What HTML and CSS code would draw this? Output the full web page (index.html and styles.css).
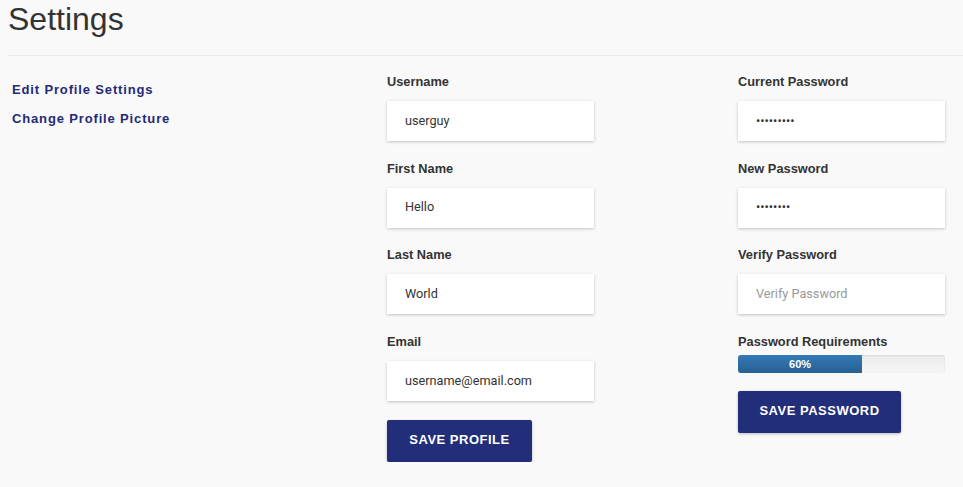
FILE: index.html
```html
<!DOCTYPE html>
<html>
<head>
<meta charset="utf-8">
<title>Settings</title>
<link rel="stylesheet" href="styles.css">
</head>
<body>
<div class="page">
  <header class="header">
    <h1 class="title">Settings</h1>
  </header>
  <main class="grid">
    <nav class="side">
      <a class="side-link" href="#">Edit Profile Settings</a>
      <a class="side-link" href="#">Change Profile Picture</a>
    </nav>
    <section class="col">
      <div class="field">
        <label class="label">Username</label>
        <input class="input" type="text" value="userguy">
      </div>
      <div class="field">
        <label class="label">First Name</label>
        <input class="input" type="text" value="Hello">
      </div>
      <div class="field">
        <label class="label">Last Name</label>
        <input class="input" type="text" value="World">
      </div>
      <div class="field">
        <label class="label">Email</label>
        <input class="input" type="text" value="username@email.com">
      </div>
      <button class="btn btn-profile">Save Profile</button>
    </section>
    <section class="col">
      <div class="field">
        <label class="label">Current Password</label>
        <input class="input" type="password" value="abcdefghi">
      </div>
      <div class="field">
        <label class="label">New Password</label>
        <input class="input" type="password" value="abcdefgh">
      </div>
      <div class="field">
        <label class="label">Verify Password</label>
        <input class="input" type="password" placeholder="Verify Password">
      </div>
      <div class="req">
        <label class="label">Password Requirements</label>
        <div class="progress"><div class="progress-bar" style="width:60%">60%</div></div>
      </div>
      <button class="btn btn-password">Save Password</button>
    </section>
  </main>
</div>
</body>
</html>
```
FILE: styles.css
```css
html, body {
  margin: 0;
  padding: 0;
  background: #f9f9f9;
  font-family: "Liberation Sans", Arial, sans-serif;
  color: #333;
}
.page {
  padding: 0 0 0 8px;
}
.header {
  border-bottom: 1px solid #ebebeb;
  height: 56px;
  box-sizing: border-box;
}
.title {
  margin: 0;
  padding-top: 1px;
  font-size: 32px;
  line-height: 36px;
  font-weight: normal;
  color: #333;
}
.grid {
  display: grid;
  grid-template-columns: 379px 351px 207px;
  padding-top: 16px;
}
.side {
  display: flex;
  flex-direction: column;
  gap: 9px;
  padding: 8px 0 0 4px;
}
.side-link {
  font-size: 13px;
  line-height: 20px;
  font-weight: bold;
  letter-spacing: 0.85px;
  color: #232a78;
  text-decoration: none;
}
.col {
  display: flex;
  flex-direction: column;
  align-items: flex-start;
}
.field {
  display: flex;
  flex-direction: column;
  margin-bottom: 17.7px;
  width: 207px;
}
.label {
  font-size: 12.8px;
  line-height: 20px;
  font-weight: bold;
  color: #333;
  margin-bottom: 9px;
}
.input {
  box-sizing: border-box;
  width: 207px;
  height: 40px;
  border: none;
  outline: none;
  background: #fff;
  box-shadow: 0 1px 3px rgba(0, 0, 0, 0.22);
  padding: 0 18px 2px;
  font-family: Roboto, "Liberation Sans", Arial, sans-serif;
  font-size: 12.7px;
  color: #333;
}
.input::placeholder {
  color: #999;
}
.req {
  display: flex;
  flex-direction: column;
  width: 207px;
}
.req .label {
  margin-bottom: 3px;
}
.progress {
  height: 18px;
  border-radius: 3px;
  background: linear-gradient(#ebebeb, #f5f5f5);
  box-shadow: inset 0 1px 2px rgba(0, 0, 0, 0.08);
  overflow: hidden;
}
.progress-bar {
  height: 100%;
  background: linear-gradient(#337ab7, #286090);
  color: #fff;
  font-size: 11px;
  font-weight: bold;
  line-height: 18px;
  text-align: center;
}
.btn {
  border: none;
  border-radius: 2px;
  background: #222e7a;
  color: #fff;
  font-family: "Liberation Sans", Arial, sans-serif;
  font-size: 13px;
  font-weight: bold;
  letter-spacing: 0.5px;
  text-transform: uppercase;
  height: 42px;
  padding: 0 0 3px;
  box-shadow: 0 1px 3px rgba(0, 0, 0, 0.25);
  cursor: pointer;
}
.btn-profile {
  width: 145px;
  margin-top: 1px;
}
.btn-password {
  width: 163px;
  margin-top: 18px;
}
```
